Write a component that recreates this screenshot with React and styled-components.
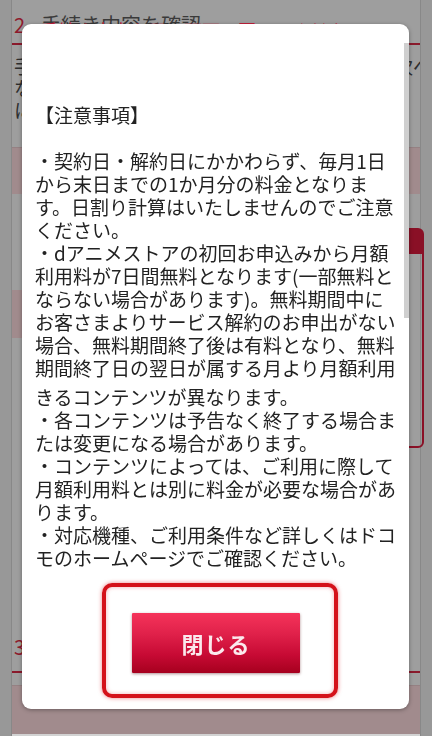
import React from "react";
import styled, { createGlobalStyle } from "styled-components";

const GlobalStyle = createGlobalStyle`
  html, body { margin: 0; padding: 0; }
  body {
    background: #989898;
    font-family: "Noto Sans CJK JP", "Noto Sans", sans-serif;
    overflow: hidden;
  }
`;

const Page = styled.div`
  height: 736px;
  padding: 0 11px;
  background: #989898;
  overflow: hidden;
`;

const Column = styled.div`
  height: 736px;
  border-left: 1px solid #888888;
  border-right: 1px solid #888888;
  background: #9e9e9e;
  display: flex;
  flex-direction: column;
  position: relative;
`;

const SectionHead = styled.div`
  height: ${(p) => p.$h}px;
  margin-top: ${(p) => p.$mt}px;
  border-bottom: 2px solid #8a1a2c;
  display: flex;
  align-items: flex-end;
  gap: 16px;
  padding: 0 0 ${(p) => p.$pb}px 2px;
  box-sizing: border-box;
  font-size: 20px;
  line-height: 24px;
  color: #3a3a3a;
  white-space: nowrap;
  overflow: hidden;
`;

const Num = styled.span`
  color: #8e1a2c;
`;

const Para = styled.div`
  margin-top: 10px;
  padding-left: 2px;
  font-size: 19px;
  line-height: 22px;
  color: #2e2e2e;
  white-space: nowrap;
  overflow: hidden;
`;

const PinkBox = styled.div`
  height: ${(p) => p.$h}px;
  margin-top: ${(p) => p.$mt}px;
  background: #a18b8d;
  border-top: 1px solid #958183;
`;

const CardRow = styled.div`
  margin-top: 34px;
  margin-right: -4px;
  display: flex;
  align-items: flex-start;
  gap: 4px;
`;

const SidePink = styled.div`
  width: 30px;
  height: 48px;
  margin-top: 62px;
  background: #a18b8d;
`;

const RedCard = styled.div`
  flex: 1;
  height: 220px;
  border: 2px solid #8a1026;
  border-radius: 6px;
  box-sizing: border-box;
  display: flex;
  flex-direction: column;
`;

const CardHead = styled.div`
  height: 24px;
  background: #8a1026;
`;

const BottomStrip = styled.div`
  flex: 1;
  background: #d2d2d2;
`;

const RedGhost = styled.div`
  position: absolute;
  left: 28px;
  top: 19px;
  font-size: 18px;
  line-height: 22px;
  color: #c4203c;
  white-space: nowrap;
`;

const Modal = styled.div`
  position: fixed;
  left: 22px;
  top: 24px;
  width: 387px;
  height: 685px;
  background: #ffffff;
  border-radius: 9px;
  box-shadow: 0 1px 4px rgba(0, 0, 0, 0.35);
  padding: 79px 0 0 13px;
  box-sizing: border-box;
  overflow: hidden;
`;

const ScrollThumb = styled.div`
  position: absolute;
  right: 0;
  top: 19px;
  width: 5px;
  height: 275px;
  background: #cfcfcf;
`;

const Notice = styled.div`
  font-size: 19px;
  line-height: 23px;
  color: #222222;
  white-space: nowrap;
`;

const Line = styled.div`
  height: 23px;
`;

const Splice = styled.div`
  height: 6px;
`;

const ButtonArea = styled.div`
  margin: 14px 0 0 67px;
  width: 236px;
  height: 115px;
  box-sizing: border-box;
  border: 4px solid #d4121a;
  border-radius: 10px;
  box-shadow: 0 0 4px rgba(220, 20, 30, 0.55), inset 0 0 4px rgba(220, 20, 30, 0.35);
  padding: 26px 0 0 26px;
`;

const CloseButton = styled.button`
  width: 168px;
  height: 60px;
  border: none;
  border-radius: 1px;
  background: linear-gradient(to bottom, #f5335a 0%, #e0214a 35%, #c70a34 70%, #a6001e 100%);
  box-shadow: 0 1px 3px rgba(80, 0, 10, 0.45);
  color: #fbe9ed;
  font-family: "Noto Sans CJK JP", sans-serif;
  font-size: 22px;
  font-weight: 700;
  letter-spacing: 1px;
  padding: 0;
  cursor: pointer;
`;

const lines = [
  "【注意事項】",
  "",
  "・契約日・解約日にかかわらず、毎月1日",
  "から末日までの1か月分の料金となりま",
  "す。日割り計算はいたしませんのでご注意",
  "ください。",
  "・dアニメストアの初回お申込みから月額",
  "利用料が7日間無料となります(一部無料と",
  "ならない場合があります)。無料期間中に",
  "お客さまよりサービス解約のお申出がない",
  "場合、無料期間終了後は有料となり、無料",
  "期間終了日の翌日が属する月より月額利用",
];

const lines2 = [
  "きるコンテンツが異なります。",
  "・各コンテンツは予告なく終了する場合ま",
  "たは変更になる場合があります。",
  "・コンテンツによっては、ご利用に際して",
  "月額利用料とは別に料金が必要な場合があ",
  "ります。",
  "・対応機種、ご利用条件など詳しくはドコ",
  "モのホームページでご確認ください。",
];

export default function App() {
  return (
    <>
      <GlobalStyle />
      <Page>
        <Column>
          <SectionHead $h={45} $mt={0} $pb={6}>
            <Num>2</Num>
            <span>手続き内容を確認</span>
          </SectionHead>
          <Para>
            手続き内容をご確認のうえ、よろしければ「次へ」
            <br />
            なお、お申込み内容に誤りがある場合は、
            <br />
            に戻って修正してください。
          </Para>
          <PinkBox $h={46} $mt={26} />
          <CardRow>
            <SidePink />
            <RedCard>
              <CardHead />
            </RedCard>
          </CardRow>
          <SectionHead $h={35} $mt={190} $pb={12}>
            <Num>3</Num>
            <span>お申込み</span>
          </SectionHead>
          <PinkBox $h={48} $mt={12} />
          <BottomStrip />
          <RedGhost>手続き内容を元の画面に戻ってください。</RedGhost>
        </Column>
      </Page>
      <Modal>
        <ScrollThumb />
        <Notice>
          {lines.map((t, i) => (
            <Line key={i}>{t}</Line>
          ))}
          <Splice />
          {lines2.map((t, i) => (
            <Line key={"b" + i}>{t}</Line>
          ))}
        </Notice>
        <ButtonArea>
          <CloseButton>閉じる</CloseButton>
        </ButtonArea>
      </Modal>
    </>
  );
}
